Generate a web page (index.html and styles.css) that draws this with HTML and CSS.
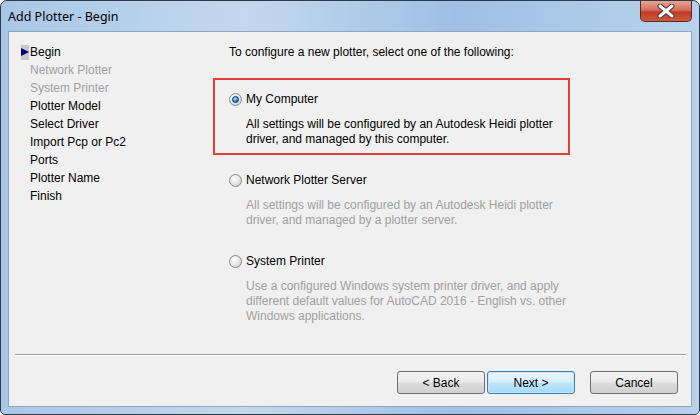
FILE: index.html
```html
<!DOCTYPE html>
<html lang="en">
<head>
    <meta charset="UTF-8">
    <title>Add Plotter - Begin</title>
    <link rel="stylesheet" href="styles.css">
</head>
<body>
    <div class="window">
        <div class="titlebar">
            <span class="title">Add Plotter - Begin</span>
            <button class="close" aria-label="Close">
                <svg width="18" height="14" viewBox="0 0 18 14">
                    <path d="M3 2 L15 12 M15 2 L3 12" stroke="#4a3030" stroke-width="5" stroke-linecap="round"/>
                    <path d="M3 2 L15 12 M15 2 L3 12" stroke="#fff" stroke-width="3" stroke-linecap="round"/>
                </svg>
            </button>
        </div>

        <div class="client">
            <div class="content">
                <ul class="steps">
                    <li class="current"><span class="marker"></span>Begin</li>
                    <li class="disabled">Network Plotter</li>
                    <li class="disabled">System Printer</li>
                    <li>Plotter Model</li>
                    <li>Select Driver</li>
                    <li>Import Pcp or Pc2</li>
                    <li>Ports</li>
                    <li>Plotter Name</li>
                    <li>Finish</li>
                </ul>

                <div class="main">
                    <p class="intro">To configure a new plotter, select one of the following:</p>

                    <div class="option highlighted">
                        <label class="choice"><span class="radio checked"></span>My Computer</label>
                        <p class="desc">All settings will be configured by an Autodesk Heidi plotter<br>driver, and managed by this computer.</p>
                    </div>

                    <div class="option">
                        <label class="choice"><span class="radio"></span>Network Plotter Server</label>
                        <p class="desc muted">All settings will be configured by an Autodesk Heidi plotter<br>driver, and managed by a plotter server.</p>
                    </div>

                    <div class="option">
                        <label class="choice"><span class="radio"></span>System Printer</label>
                        <p class="desc muted">Use a configured Windows system printer driver, and apply<br>different default values for AutoCAD 2016 - English vs. other<br>Windows applications.</p>
                    </div>
                </div>
            </div>

            <div class="separator"></div>

            <div class="buttons">
                <button class="btn">&lt; Back</button>
                <button class="btn default">Next &gt;</button>
                <button class="btn cancel">Cancel</button>
            </div>
        </div>
    </div>
</body>
</html>
```

FILE: styles.css
```css
html, body {
    margin: 0;
    padding: 0;
    background: #ffffff;
}
.window {
    width: 700px;
    height: 415px;
    box-sizing: border-box;
    border: 1px solid #2f3a48;
    border-radius: 7px 7px 5px 5px;
    background: linear-gradient(to right, #a9c7e6 0%, #c3d8ee 35%, #9fc0e4 65%, #b8d2ec 100%);
    display: flex;
    flex-direction: column;
    font-family: "Liberation Sans", Arial, sans-serif;
    font-size: 12px;
    color: #000;
    overflow: hidden;
}
.titlebar {
    height: 30px;
    display: flex;
    align-items: flex-start;
    justify-content: space-between;
}
.title {
    font-family: "Noto Sans", "Open Sans", sans-serif;
    font-size: 12.5px;
    color: #000;
    padding: 7px 0 0 7px;
}
.close {
    width: 52px;
    height: 21px;
    margin-right: 7px;
    padding: 0;
    border: 1px solid #5a2a25;
    border-top: none;
    border-radius: 0 0 5px 5px;
    background: linear-gradient(to bottom, #e8a595 0%, #d5705e 45%, #c23a26 55%, #cf5a3c 100%);
    display: flex;
    align-items: center;
    justify-content: center;
}
.client {
    flex: 1;
    margin: 0 7px 7px;
    border: 1px solid #8fa6bf;
    background: #f0f0f0;
    display: flex;
    flex-direction: column;
}
.content {
    flex: 1;
    display: flex;
    padding: 11px 0 0 12px;
}
.steps {
    list-style: none;
    margin: 0;
    padding: 0;
    width: 192px;
}
.steps li {
    height: 18px;
    line-height: 18px;
    padding-left: 9px;
    white-space: nowrap;
}
.steps li.current {
    padding-left: 0;
    display: flex;
    align-items: center;
}
.marker {
    width: 8px;
    height: 15px;
    margin-right: 1px;
    background: #c8c8c8;
    position: relative;
}
.marker::after {
    content: "";
    position: absolute;
    left: 0;
    top: 3px;
    border-left: 8px solid #000080;
    border-top: 4.5px solid transparent;
    border-bottom: 4.5px solid transparent;
}
.steps li.disabled {
    color: #a0a0a0;
}
.main {
    width: 360px;
}
.intro {
    margin: 0 0 17px;
    padding-left: 16px;
    line-height: 18px;
}
.option {
    width: 357px;
    box-sizing: border-box;
    border: 2px solid transparent;
    padding: 10px 0 6px 14px;
    margin-bottom: 4px;
}
.option.highlighted {
    border-color: #e0403c;
}
.choice {
    display: flex;
    align-items: center;
    height: 18px;
    gap: 4px;
}
.radio {
    width: 11px;
    height: 11px;
    border-radius: 50%;
    border: 1px solid #8a8a8a;
    background: radial-gradient(circle at 40% 35%, #ffffff 0%, #e6e6e6 50%, #c4c4c4 100%);
    position: relative;
}
.radio.checked::after {
    content: "";
    position: absolute;
    left: 2px;
    top: 2px;
    width: 5px;
    height: 5px;
    border-radius: 50%;
    border: 1px solid #0b3a66;
    background: radial-gradient(circle at 40% 35%, #bfe6ff 0%, #2a8ad6 55%, #0d4f8f 100%);
}
.desc {
    margin: 9px 0 0 17px;
    line-height: 15px;
    white-space: nowrap;
}
.desc.muted {
    color: #a0a0a0;
}
.separator {
    margin: 0 5px 0 6px;
    height: 1px;
    background: #a0a0a0;
    border-bottom: 1px solid #ffffff;
}
.buttons {
    display: flex;
    justify-content: flex-end;
    gap: 2px;
    padding: 15px 13px 12px;
}
.btn {
    width: 88px;
    height: 23px;
    border: 1px solid #707070;
    border-radius: 3px;
    background: linear-gradient(to bottom, #f2f2f2 0%, #ebebeb 48%, #dddddd 52%, #cfcfcf 100%);
    font-family: "Liberation Sans", Arial, sans-serif;
    font-size: 12px;
    color: #000;
    padding: 0;
}
.btn.default {
    border-color: #3c7fb1;
    background: linear-gradient(to bottom, #eaf6fd 0%, #d9f0fc 48%, #bee6fd 52%, #a7d9f5 100%);
    box-shadow: inset 0 0 0 1px #c4e5f6;
}
.btn.cancel {
    margin-left: 13px;
}
```
